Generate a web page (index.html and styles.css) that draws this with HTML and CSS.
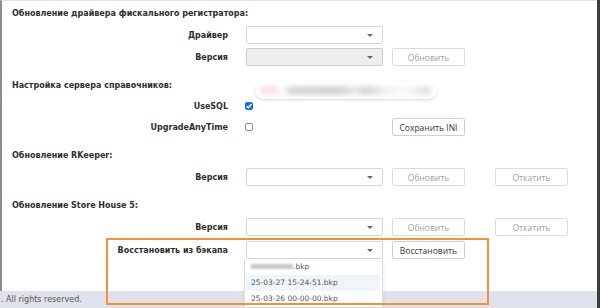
FILE: index.html
```html
<!DOCTYPE html>
<html lang="ru">
<head>
    <meta charset="UTF-8">
    <meta name="viewport" content="width=device-width, initial-scale=1.0">
    <title>Обслуживание</title>
    <link rel="stylesheet" href="styles.css">
</head>
<body>
    <div class="window">
        <div class="page">
            <section class="block">
                <h3 class="block-title">Обновление драйвера фискального регистратора:</h3>
                <div class="row">
                    <label class="row-label">Драйвер</label>
                    <div class="select"><span class="caret"></span></div>
                </div>
                <div class="row">
                    <label class="row-label">Версия</label>
                    <div class="select is-disabled"><span class="caret"></span></div>
                    <button class="btn" disabled>Обновить</button>
                </div>
            </section>

            <section class="block">
                <h3 class="block-title">
                    Настройка сервера справочников:
                    <!-- redacted server address -->
                    <span class="redacted"><span class="redacted-blur"></span></span>
                </h3>
                <div class="row row-check">
                    <label class="row-label">UseSQL</label>
                    <span class="check is-on">
                        <svg viewBox="0 0 8 8" width="8" height="8"><path d="M1.6 4.2 L3.3 5.8 L6.4 2.2" fill="none" stroke="#fff" stroke-width="1.4"/></svg>
                    </span>
                </div>
                <div class="row">
                    <label class="row-label">UpgradeAnyTime</label>
                    <span class="check"></span>
                    <button class="btn btn-active">Сохранить INI</button>
                </div>
            </section>

            <section class="block">
                <h3 class="block-title">Обновление RKeeper:</h3>
                <div class="row">
                    <label class="row-label">Версия</label>
                    <div class="select"><span class="caret"></span></div>
                    <button class="btn" disabled>Обновить</button>
                    <button class="btn btn-far" disabled>Откатить</button>
                </div>
            </section>

            <section class="block">
                <h3 class="block-title">Обновление Store House 5:</h3>
                <div class="row">
                    <label class="row-label">Версия</label>
                    <div class="select"><span class="caret"></span></div>
                    <button class="btn" disabled>Обновить</button>
                    <button class="btn btn-far" disabled>Откатить</button>
                </div>
                <div class="row row-restore">
                    <label class="row-label">Восстановить из бэкапа</label>
                    <div class="select"><span class="caret"></span></div>
                    <button class="btn btn-active">Восстановить</button>

                    <ul class="dropdown">
                        <li><span class="blur-name"></span>.bkp</li>
                        <li class="is-hover">25-03-27 15-24-51.bkp</li>
                        <li>25-03-26 00-00-00.bkp</li>
                    </ul>
                    <div class="highlight"></div>
                </div>
            </section>
        </div>

        <footer class="footer">. All rights reserved.</footer>
    </div>
</body>
</html>
```

FILE: styles.css
```css
* {
    box-sizing: border-box;
}

body {
    margin: 0;
    font-family: 'DejaVu Sans', Verdana, sans-serif;
    color: #333;
    background-color: #fff;
}

.window {
    height: 308px;
    display: flex;
    flex-direction: column;
    border-right: 3px solid #3d3d3d; /* window edge */
    overflow: hidden;
}

.page {
    flex: 1;
    border-left: 2px solid #8c8c8c;
    border-top: 1px solid #e2e2e2;
    padding: 7px 0 0 10px;
}

.block + .block {
    margin-top: 14px;
}

.block-title {
    position: relative;
    margin: 0 0 6px;
    font-size: 8px;
    line-height: 12px;
    font-weight: bold;
    color: #2e2e2e;
}

/* form rows */
.row {
    display: grid;
    grid-template-columns: 225px 137px 73px 94px;
    column-gap: 9px;
    align-items: center;
    height: 18px;
    margin-bottom: 4px;
}

.row:last-child {
    margin-bottom: 0;
}

.row-check {
    height: 16px;
}

.row-restore {
    position: relative;
    margin-top: 5px;
}

.row-label {
    text-align: right;
    padding-right: 9px;
    font-size: 8px;
    font-weight: bold;
    color: #2e2e2e;
    white-space: nowrap;
}

.select {
    position: relative;
    height: 18px;
    border: 1px solid #d4d4d4;
    border-radius: 2px;
    background-color: #fff;
}

.select.is-disabled {
    background-color: #eee;
    border-color: #ccc;
}

.caret {
    position: absolute;
    right: 9px;
    top: 7px;
    width: 0;
    height: 0;
    border-left: 3px solid transparent;
    border-right: 3px solid transparent;
    border-top: 3px solid #666;
}

.btn {
    width: 73px;
    height: 18px;
    padding: 0;
    border: 1px solid #dcdcdc;
    border-radius: 2px;
    background-color: #fff;
    font-family: 'Open Sans', 'DejaVu Sans', sans-serif;
    font-size: 8.5px;
    color: #a0a0a0;
}

.btn-active {
    color: #333;
    border-color: #d0d0d0;
}

.btn-far {
    margin-left: 21px;
}

.check {
    display: block;
    width: 8px;
    height: 8px;
    margin-left: -1px;
    border: 1px solid #8a8a8a;
    border-radius: 2px;
    background-color: #fff;
}

.check.is-on {
    border-color: #1a6fe0;
    background-color: #1a6fe0;
}

.check svg {
    display: block;
    margin: -1px 0 0 -1px;
}

/* blurred server address */
.redacted {
    position: absolute;
    left: 243px;
    top: 2px;
    width: 182px;
    height: 17px;
    border-radius: 9px;
    background-color: #fff;
    box-shadow: 0 1px 3px rgba(0, 0, 0, 0.16);
    overflow: hidden;
}

.redacted-blur {
    position: absolute;
    left: 6px;
    right: 6px;
    top: 4px;
    height: 9px;
    filter: blur(2px);
    background: linear-gradient(90deg, #fbe4e4 0, #fbe4e4 8%, #fff 12%, #d8d8d8 18%, #d2d2d2 45%, #e8e8e8 55%, #d6d6d6 62%, #f0f0f0 72%, #fafafa 85%, #e6e6e6 95%);
}

/* open select list */
.dropdown {
    position: absolute;
    left: 232px;
    top: 18px;
    width: 139px;
    margin: 0;
    padding: 0;
    list-style: none;
    background-color: #fff;
    border-left: 1px solid #ddd;
    border-right: 1px solid #ddd;
    box-shadow: 0 2px 4px rgba(0, 0, 0, 0.08);
    z-index: 5;
}

.dropdown li {
    height: 16px;
    line-height: 16px;
    padding-left: 5px;
    margin: 0 2px 0 1px;
    font-size: 7.5px;
    color: #555;
}

.dropdown li.is-hover {
    background-color: #eef5fb;
}

.blur-name {
    display: inline-block;
    width: 42px;
    height: 5px;
    vertical-align: middle;
    background-color: #c8c8c8;
    filter: blur(1.2px);
}

.highlight {
    position: absolute;
    left: 94px;
    top: -3px;
    width: 383px;
    height: 67px;
    border: 2px solid #f29238;
    z-index: 6;
}

.footer {
    height: 17px;
    padding: 2px 0 0 1px;
    background-color: #dfe2ea;
    font-size: 8px;
    line-height: 14px;
    color: #555;
}
```
